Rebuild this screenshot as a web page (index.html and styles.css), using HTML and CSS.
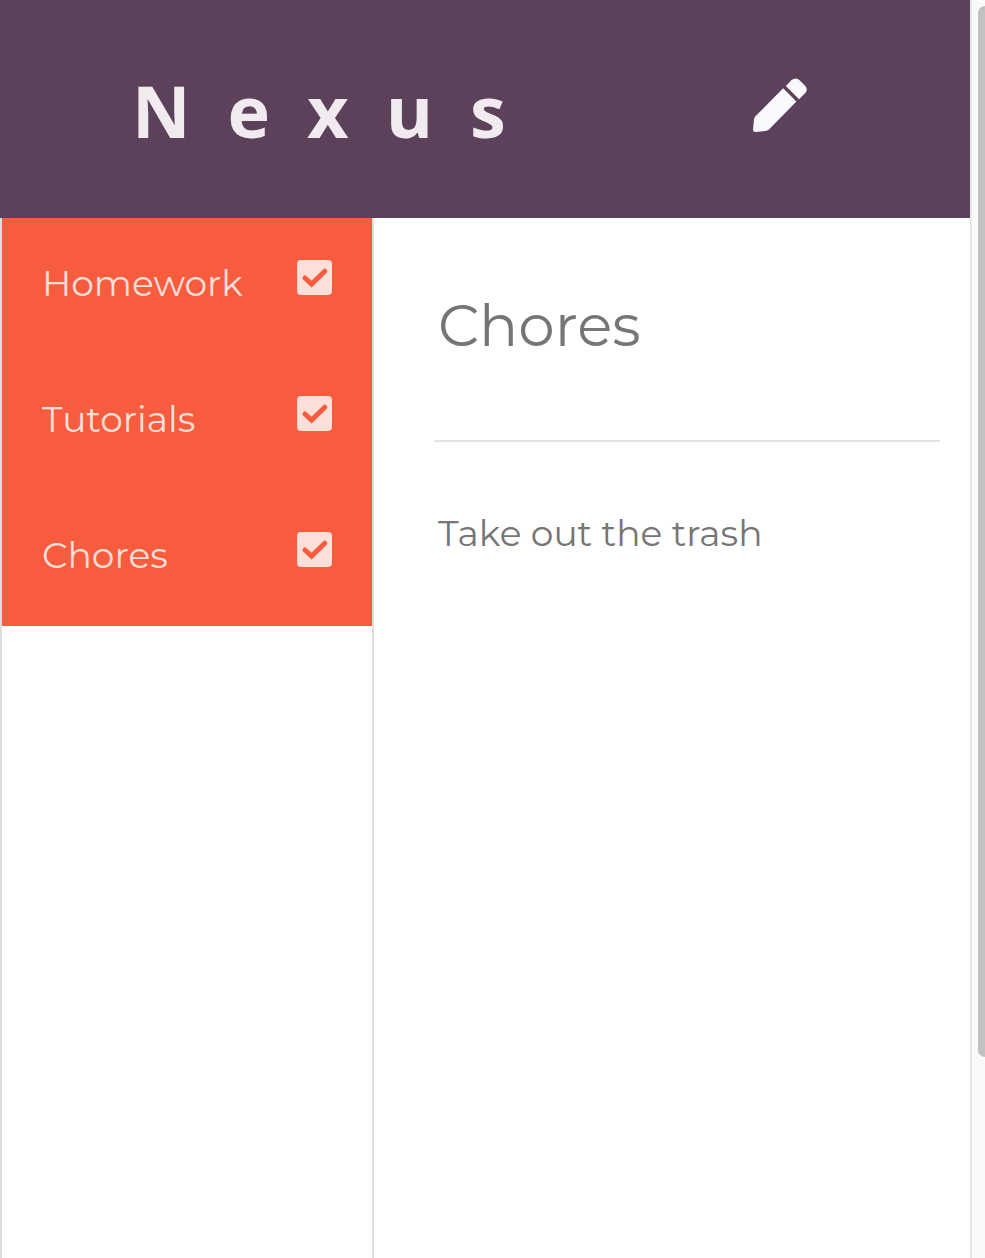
FILE: index.html
```html
<!DOCTYPE html>
<html lang="en">
<head>
<meta charset="utf-8">
<meta name="viewport" content="width=device-width, initial-scale=1">
<title>Nexus</title>
<link rel="stylesheet" href="styles.css">
</head>
<body>
<div class="shell">
  <div class="app">
    <header class="header">
      <h1 class="brand">Nexus</h1>
      <button class="edit" type="button" aria-label="Edit">
        <svg class="edit-icon" viewBox="39 25 163 163" aria-hidden="true">
          <path d="M130 56L170 96L88 180Q84 184 78 185L46 188Q39 188 39 181L42 150Q43 144 47 140Z"/>
          <path d="M138 49L155 32Q167 21 179 31L197 49Q206 60 196 71L178 89Z"/>
        </svg>
      </button>
    </header>
    <div class="columns">
      <nav class="sidebar">
        <ul class="lists">
          <li class="list">
            <label class="list-name" for="homework">Homework</label>
            <span class="check">
              <input class="box" id="homework" type="checkbox" checked>
              <svg class="tick" viewBox="0 0 35 35" aria-hidden="true"><path d="M8 18L14.6 24L27.8 11.2"/></svg>
            </span>
          </li>
          <li class="list">
            <label class="list-name" for="tutorials">Tutorials</label>
            <span class="check">
              <input class="box" id="tutorials" type="checkbox" checked>
              <svg class="tick" viewBox="0 0 35 35" aria-hidden="true"><path d="M8 18L14.6 24L27.8 11.2"/></svg>
            </span>
          </li>
          <li class="list">
            <label class="list-name" for="chores">Chores</label>
            <span class="check">
              <input class="box" id="chores" type="checkbox" checked>
              <svg class="tick" viewBox="0 0 35 35" aria-hidden="true"><path d="M8 18L14.6 24L27.8 11.2"/></svg>
            </span>
          </li>
        </ul>
      </nav>
      <main class="content">
        <h2 class="title">Chores</h2>
        <hr class="rule">
        <p class="task">Take out the trash</p>
      </main>
    </div>
  </div>
  <div class="scrollbar" aria-hidden="true"><div class="thumb"></div></div>
</div>
</body>
</html>
```
FILE: styles.css
```css
* { box-sizing: border-box; }

body {
  margin: 0;
  background: #fff;
  color: #757575;
  font-family: Montserrat, Inter, sans-serif;
}

.shell { display: flex; min-height: 100vh; }

.app { flex: 1; min-width: 0; display: flex; flex-direction: column; }

.header {
  display: flex;
  align-items: center;
  justify-content: space-between;
  padding: 61px 163px 59px 132px;
  background: #5c415b;
}

.brand {
  margin: 0;
  color: #f1ebf0;
  font: 700 72px/98px "Open Sans", "Noto Sans", sans-serif;
  letter-spacing: 37px;
}

.edit {
  display: flex;
  margin: 0 0 10px;
  padding: 0;
  border: 0;
  background: none;
  cursor: pointer;
}

.edit-icon { width: 54px; height: 54px; fill: #f9f8fd; }

.columns { flex: 1; display: flex; }

.sidebar {
  flex: 0 0 374px;
  border: solid #dedede;
  border-width: 0 2px;
}

.lists { margin: 0; padding: 0; list-style: none; background: #f75c3f; }

.list {
  display: flex;
  align-items: flex-start;
  justify-content: space-between;
  height: 136px;
  padding: 42px 40px 0;
}

.list-name { color: #fedfd9; font-size: 36px; line-height: 46px; }

.check { position: relative; display: flex; }

.box {
  appearance: none;
  width: 35px;
  height: 35px;
  margin: 0;
  border-radius: 4px;
  background: #fedfd9;
}

.tick {
  position: absolute;
  inset: 0;
  fill: none;
  stroke: #f75c3f;
  stroke-width: 5;
  stroke-linecap: round;
  pointer-events: none;
}

.box:not(:checked) + .tick { display: none; }

.content { flex: 1; min-width: 0; padding: 72px 30px 0 60px; }

.title { margin: 0 4px; font-size: 58px; font-weight: 400; line-height: 72px; }

.rule { margin: 78px 0 68px; border: 0; border-top: 2px solid #e3e3e3; }

.task { margin: 0 4px; font-size: 36px; line-height: 46px; }

.scrollbar {
  flex: 0 0 15px;
  padding: 6px 0 0 6px;
  border-left: 2px solid #e8e8e8;
  background: #fafafa;
}

.thumb { height: calc(100vh - 207px); border-radius: 8px 0 0 8px; background: #c1c1c1; }
```
